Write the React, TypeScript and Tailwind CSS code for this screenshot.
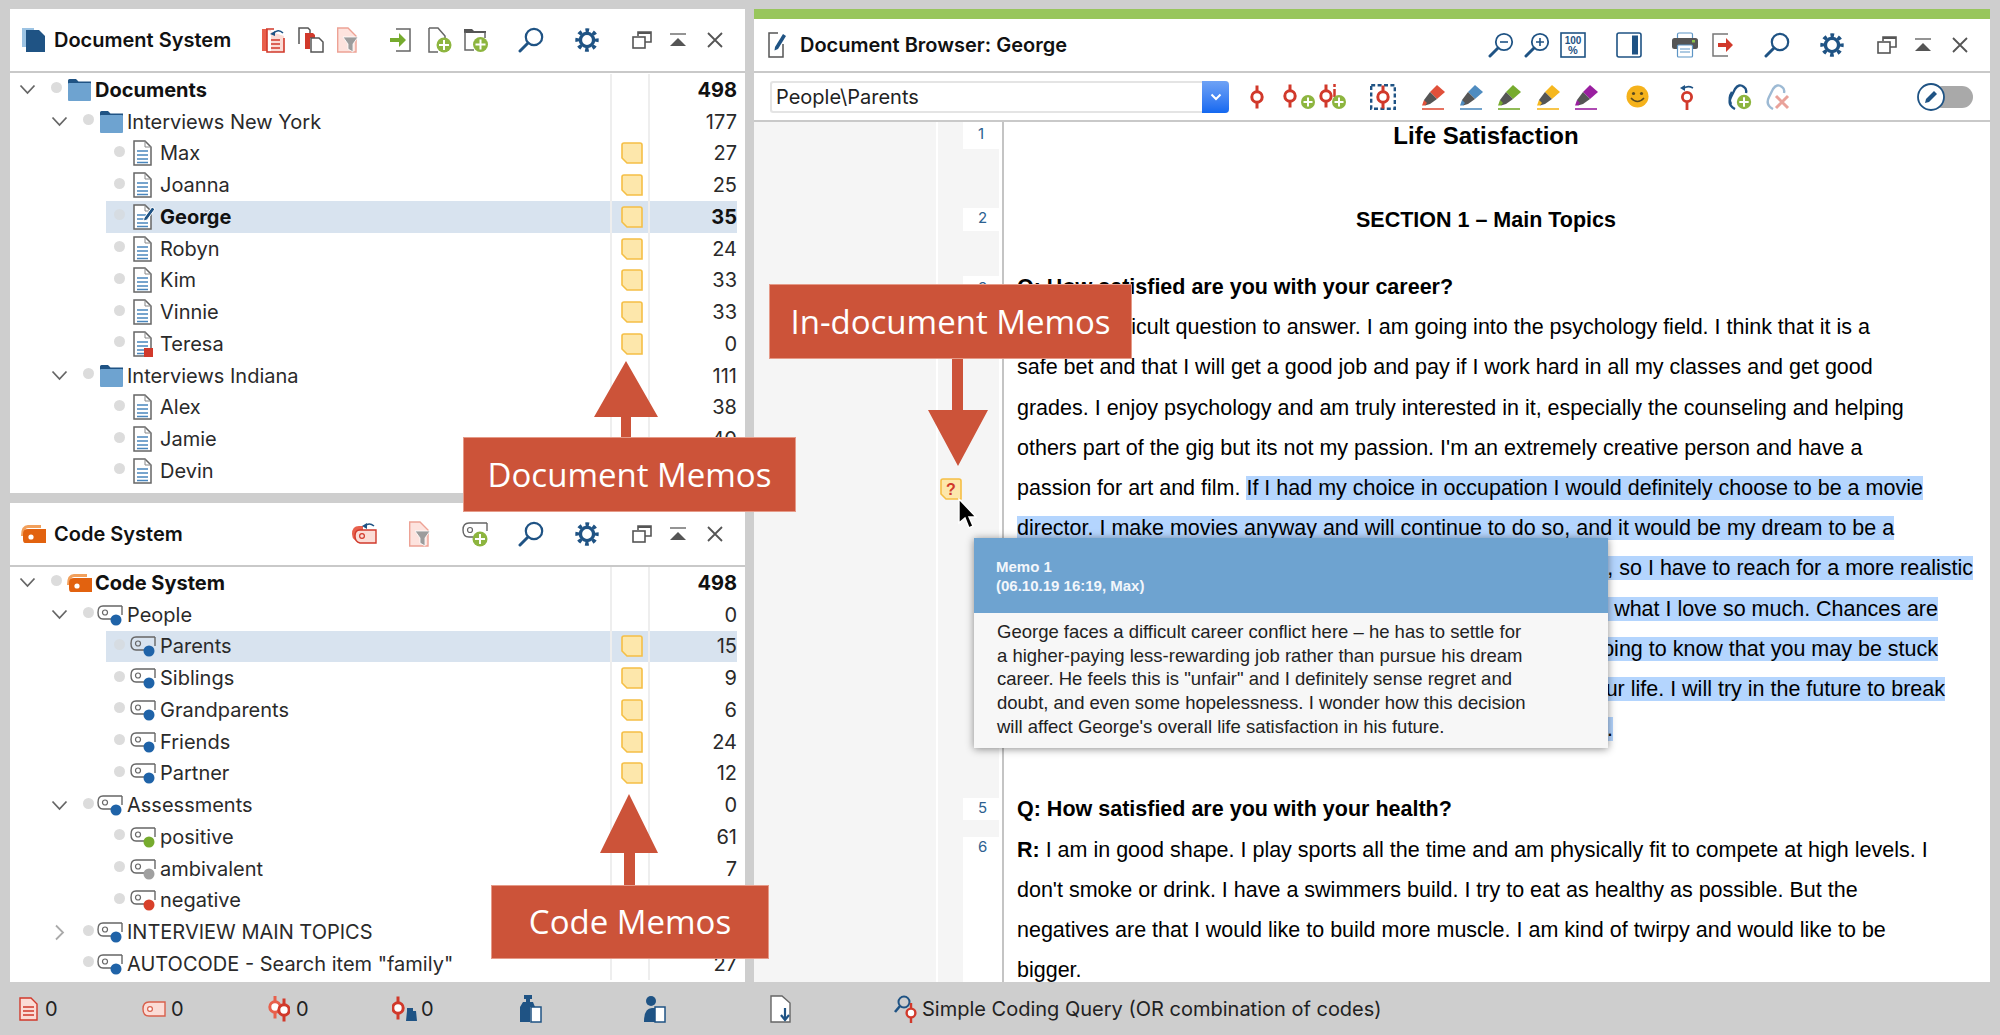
import type { ReactNode } from "react"

const navy = "#1f5384"
const red = "#d1392b"
const green = "#8db53f"

function Plus({ x, y, r = 7 }: { x: number; y: number; r?: number }) {
  return (
    <g>
      <circle cx={x} cy={y} r={r} fill={green} />
      <path d={`M${x - r + 2.5} ${y}H${x + r - 2.5}M${x} ${y - r + 2.5}V${y + r - 2.5}`} stroke="#fff" strokeWidth="2" />
    </g>
  )
}

function Chevron({ open = true }: { open?: boolean }) {
  return open ? (
    <svg width="17" height="11" viewBox="0 0 17 11" fill="none">
      <path d="M1.5 1.5L8.5 9L15.5 1.5" stroke="#666" strokeWidth="1.8" />
    </svg>
  ) : (
    <svg width="11" height="17" viewBox="0 0 11 17" fill="none">
      <path d="M2 1.5L9 8.5L2 15.5" stroke="#aaa" strokeWidth="1.8" />
    </svg>
  )
}

function Folder() {
  return (
    <svg width="23" height="22" viewBox="0 0 23 22">
      <path d="M0 1.5Q0 0 1.5 0H8L10.5 2.5H23V5H0Z" fill={navy} />
      <rect y="4" width="23" height="18" rx="1" fill="#6ea3d0" />
    </svg>
  )
}

function DocFile({ edit, flag }: { edit?: boolean; flag?: boolean }) {
  return (
    <svg width="22" height="26" viewBox="0 0 22 26" fill="none">
      <path d="M1 1H12L18 7V25H1Z" fill="#fff" stroke="#666" strokeWidth="1.5" />
      <path d="M12 1V7H18" stroke="#888" strokeWidth="1" />
      <path d="M4 11H15M4 15H15M4 19H15M4 22.5H15" stroke="#4a86bd" strokeWidth="1.4" />
      {edit && <path d="M11 14L19 3L22 5L14 16L10.5 17Z" fill={navy} stroke="#fff" strokeWidth="1" />}
      {flag && <rect x="11" y="17" width="9" height="9" fill={red} />}
    </svg>
  )
}

function Memo({ q }: { q?: boolean }) {
  return (
    <svg width="22" height="22" viewBox="0 0 22 22">
      <path d="M3 1H19Q21 1 21 3V21H6L1 16V3Q1 1 3 1Z" fill="#fde7ab" stroke="#f5bf45" strokeWidth="1.6" />
      {q && (
        <text x="11" y="17" textAnchor="middle" fontSize="16" fontWeight="700" fill={red} fontFamily="Liberation Sans">
          ?
        </text>
      )}
    </svg>
  )
}

function CodeTag({ color = "#1f63a8" }: { color?: string }) {
  return (
    <svg width="26" height="22" viewBox="0 0 26 22" fill="none">
      <path d="M25 2H6Q1 2 1 8.5T6 15H14" stroke="#666" strokeWidth="1.4" />
      <path d="M25 2V11" stroke="#666" strokeWidth="1.4" />
      <circle cx="8" cy="8.5" r="2.5" stroke="#666" strokeWidth="1.2" />
      <circle cx="19" cy="16" r="5.5" fill={color} />
    </svg>
  )
}

function CodeRoot({ w = 26 }: { w?: number }) {
  return (
    <svg width={w} height="20" viewBox="0 0 26 20">
      <path d="M1 12Q1 1 8 1H21V4H8Q4 4 4 12Z" fill="#f2a05c" />
      <path d="M5 19Q3 19 3 15V10Q3 5 8 5H26V19Z" fill="#e2620f" />
      <circle cx="11" cy="13" r="2.6" fill="#fff" />
    </svg>
  )
}

function Search() {
  return (
    <svg width="26" height="26" viewBox="0 0 26 26" fill="none">
      <circle cx="16" cy="10" r="8.2" stroke={navy} strokeWidth="2.2" />
      <path d="M10 16L2 24" stroke={navy} strokeWidth="3" strokeLinecap="round" />
    </svg>
  )
}

function Zoom({ plus }: { plus?: boolean }) {
  return (
    <svg width="26" height="26" viewBox="0 0 26 26" fill="none">
      <circle cx="16" cy="10" r="8.2" stroke={navy} strokeWidth="1.8" />
      <path d="M10 16L2 24" stroke={navy} strokeWidth="3" strokeLinecap="round" />
      <path d={plus ? "M12 10H20M16 6V14" : "M12 10H20"} stroke={navy} strokeWidth="1.6" />
    </svg>
  )
}

function Gear() {
  return (
    <svg width="24" height="24" viewBox="0 0 24 24" fill="none">
      <circle cx="12" cy="12" r="6.6" stroke={navy} strokeWidth="3.4" />
      <circle cx="12" cy="12" r="9.8" stroke={navy} strokeWidth="3.8" strokeDasharray="3.7 3.99" strokeDashoffset="1.85" />
    </svg>
  )
}

function WindowBtn() {
  return (
    <svg width="20" height="18" viewBox="0 0 20 18" fill="none">
      <path d="M6 5V1H19V11H13" stroke="#555" strokeWidth="1.6" />
      <path d="M6 1H19V3H6Z" fill="#555" />
      <rect x="1" y="6" width="12" height="11" stroke="#555" strokeWidth="1.6" />
    </svg>
  )
}

function CollapseBtn() {
  return (
    <svg width="16" height="14" viewBox="0 0 16 14">
      <path d="M0 1H16" stroke="#666" strokeWidth="1.4" />
      <path d="M8 5L16 13H0Z" fill="#555" />
    </svg>
  )
}

function CloseBtn() {
  return (
    <svg width="16" height="16" viewBox="0 0 16 16" fill="none">
      <path d="M1 1L15 15M15 1L1 15" stroke="#555" strokeWidth="1.8" />
    </svg>
  )
}

function WinControls() {
  return (
    <>
      <Slot className="ml-[19px]"><WindowBtn /></Slot>
      <Slot><CollapseBtn /></Slot>
      <Slot className="ml-[1px]"><CloseBtn /></Slot>
    </>
  )
}

function Slot({ children, className = "" }: { children: ReactNode; className?: string }) {
  return <span className={`w-[36px] shrink-0 flex justify-center ${className}`}>{children}</span>
}

function RestoreDocs() {
  return (
    <svg width="24" height="26" viewBox="0 0 24 26" fill="none">
      <path d="M0 2H5V24H0Z" fill="#e8604c" />
      <path d="M4 3H9V25H22V9" fill="#fbdcd6" />
      <path d="M4 2H12M22 11V25H5V2" stroke={red} strokeWidth="1.6" />
      <path d="M9 13H18M9 17H18M9 21H18" stroke={red} strokeWidth="1.5" />
      <path d="M11 7Q16 1 21 6" stroke={navy} strokeWidth="1.6" />
      <path d="M8 7L13 4L13 9Z" fill={navy} />
    </svg>
  )
}

function CopyDocs() {
  return (
    <svg width="26" height="26" viewBox="0 0 26 26" fill="none">
      <path d="M1 17V1H10L12 3V6" stroke="#555" strokeWidth="1.5" />
      <path d="M7 6H15L17 8V11H12V22H7Z" fill={red} />
      <path d="M13 11H21L25 15V25H13Z" fill="#fff" stroke="#555" strokeWidth="1.5" />
    </svg>
  )
}

function FilterDoc() {
  return (
    <svg width="22" height="26" viewBox="0 0 22 26">
      <path d="M0.7 1H11L19 9V25H0.7Z" fill="#fde3de" stroke="#eda295" strokeWidth="1.4" />
      <path d="M6 10H21L16 17V25L11 22V17Z" fill="#9c9c9c" stroke="#fff" strokeWidth="0.8" />
    </svg>
  )
}

function ImportDoc() {
  return (
    <svg width="22" height="26" viewBox="0 0 22 26" fill="none">
      <path d="M6 2H20V24H6" stroke="#666" strokeWidth="1.5" />
      <path d="M0 11H9V6L16 13L9 20V15H0Z" fill="#76ab2e" />
    </svg>
  )
}

function NewDoc() {
  return (
    <svg width="24" height="26" viewBox="0 0 24 26" fill="none">
      <path d="M1 1H10L17 9V12M10 25H1V1" stroke="#666" strokeWidth="1.5" />
      <Plus x={16} y={18} r={7.5} />
    </svg>
  )
}

function NewFolder() {
  return (
    <svg width="24" height="24" viewBox="0 0 24 24" fill="none">
      <path d="M0 1H8L10 3H22V5H0Z" fill="#555" />
      <path d="M1 4V22H10M21 4V10" stroke="#666" strokeWidth="1.5" />
      <Plus x={16.5} y={16.5} r={7.5} />
    </svg>
  )
}

function CodeMark({ faded }: { faded?: boolean }) {
  return (
    <g fill="none" stroke={faded ? "#e8604c" : red}>
      <path d="M0 -11.5V-6M0 6V11.5" strokeWidth="3" />
      <circle r="5.2" strokeWidth="3" fill="#fff" />
    </g>
  )
}

function Code1() {
  return (
    <svg width="16" height="24" viewBox="-8 -12 16 24">
      <CodeMark />
    </svg>
  )
}

function CodeAdd() {
  return (
    <svg width="36" height="26" viewBox="0 0 36 26">
      <g transform="translate(8 12)"><CodeMark /></g>
      <Plus x={26} y={18} r={7} />
    </svg>
  )
}

function CodeInfoAdd() {
  return (
    <svg width="28" height="26" viewBox="0 0 28 26">
      <g transform="translate(7 12)"><CodeMark /></g>
      <path d="M15.5 0V3M15.5 5V13" stroke={red} strokeWidth="2.5" />
      <Plus x={20} y={18} r={7} />
    </svg>
  )
}

function CodeBox() {
  return (
    <svg width="26" height="26" viewBox="0 0 26 26" fill="none">
      <rect x="1.2" y="1.2" width="23.6" height="23.6" stroke={navy} strokeWidth="2.4" strokeDasharray="4 2.4" />
      <g transform="translate(13 13)"><CodeMark /></g>
    </svg>
  )
}

function Highlighter({ color }: { color: string }) {
  return (
    <svg width="24" height="26" viewBox="0 0 24 26">
      <path d="M15 1L23 8L15 15L8 8Z" fill={color} />
      <path d="M8 8L15 15L8 20L3 21.5L2 16Z" fill="#555" />
      <path d="M2 16L5 19L3 21.5H0Z" fill={color} />
      <path d="M0 25H22" stroke={color} strokeWidth="1.6" />
    </svg>
  )
}

function Smile() {
  return (
    <svg width="23" height="23" viewBox="0 0 23 23" fill="none">
      <circle cx="11.5" cy="11.5" r="11" fill="#f5b21b" />
      <circle cx="7.5" cy="8.5" r="1.6" fill="#5a4a20" />
      <circle cx="15.5" cy="8.5" r="1.6" fill="#5a4a20" />
      <path d="M5 13Q11.5 20 18 13" stroke="#5a4a20" strokeWidth="1.5" />
    </svg>
  )
}

function CodeUndo() {
  return (
    <svg width="18" height="26" viewBox="0 0 18 26" fill="none">
      <path d="M5 5Q9 1 15 4" stroke={navy} strokeWidth="1.7" />
      <path d="M2 4L7 1L7 7Z" fill={navy} />
      <circle cx="9" cy="13" r="4.6" stroke={red} strokeWidth="2.8" />
      <path d="M9 18V26" stroke={red} strokeWidth="2.8" />
    </svg>
  )
}

function LinkAdd() {
  return (
    <svg width="26" height="26" viewBox="0 0 26 26" fill="none">
      <path d="M9 25Q1 21 5 13L9 5Q13 -1 18 3Q21 5 20 9" stroke={navy} strokeWidth="2.4" />
      <path d="M6 8Q2 14 5 20" stroke={navy} strokeWidth="2.4" />
      <Plus x={18} y={18} r={7.2} />
    </svg>
  )
}

function LinkRemove() {
  return (
    <svg width="26" height="26" viewBox="0 0 26 26" fill="none">
      <path d="M9 25Q1 21 5 13L9 5Q13 -1 18 3Q21 5 20 9" stroke="#9dbad4" strokeWidth="2.4" />
      <path d="M12 12L24 24M24 12L12 24" stroke="#e9a29a" strokeWidth="3" />
    </svg>
  )
}

function Percent() {
  return (
    <svg width="26" height="26" viewBox="0 0 26 26">
      <rect x="1" y="1" width="24" height="24" fill="none" stroke={navy} strokeWidth="1.6" />
      <text x="13" y="11.5" textAnchor="middle" fontSize="10" fontWeight="700" fill={navy} fontFamily="Liberation Sans">100</text>
      <text x="13" y="22" textAnchor="middle" fontSize="11" fontWeight="700" fill={navy} fontFamily="Liberation Sans">%</text>
    </svg>
  )
}

function SideBar() {
  return (
    <svg width="26" height="26" viewBox="0 0 26 26">
      <rect x="1" y="1" width="24" height="24" rx="2" fill="none" stroke={navy} strokeWidth="1.6" />
      <rect x="16" y="3.5" width="6" height="19" fill={navy} />
    </svg>
  )
}

function Printer() {
  return (
    <svg width="26" height="26" viewBox="0 0 26 26">
      <rect x="5.5" y="1" width="15" height="9" rx="1.5" fill="#fff" stroke="#5d95c5" strokeWidth="1.2" />
      <rect x="0" y="6" width="26" height="11" rx="2.5" fill="#555" />
      <rect x="20" y="8" width="3" height="2.5" fill="#8bc34a" />
      <rect x="5.5" y="13" width="15" height="12" rx="1" fill="#fff" stroke="#5d95c5" strokeWidth="1.2" />
      <path d="M8 17H18M8 20H18" stroke="#5d95c5" strokeWidth="1.2" />
    </svg>
  )
}

function ExportDoc() {
  return (
    <svg width="22" height="24" viewBox="0 0 22 24" fill="none">
      <path d="M16 1H1V23H16" stroke="#777" strokeWidth="1.5" />
      <path d="M6 10H14V5L21 12L14 19V14H6Z" fill={red} />
    </svg>
  )
}

function Toggle() {
  return (
    <span className="flex items-center w-[56px] h-[28px] relative shrink-0">
      <span className="ml-[14px] w-[42px] h-[22px] rounded-full bg-[#a9a9a9]" />
      <svg className="absolute left-0 top-0" width="28" height="28" viewBox="0 0 28 28" fill="none">
        <circle cx="14" cy="14" r="13" fill="#fff" stroke={navy} strokeWidth="1.8" />
        <path d="M8 20L9 16L17 8L20 11L12 19Z" fill={navy} />
      </svg>
    </span>
  )
}

function PanelHeader({ icon, title, children }: { icon: ReactNode; title: string; children: ReactNode }) {
  return (
    <div className="h-[64px] shrink-0 flex items-center pr-[12px] border-b-2 border-[#c9c9c9]">
      <span className="w-[44px] flex justify-end pr-[8px]">{icon}</span>
      <span className="text-[20px] font-semibold text-[#111]">{title}</span>
      <div className="ml-auto flex items-center">{children}</div>
    </div>
  )
}

type RowData = {
  name: string
  count?: string
  level: 0 | 1 | 2
  icon: ReactNode
  chevron?: "open" | "closed"
  memo?: boolean
  bold?: boolean
  selected?: boolean
}

function TreeRow({ row }: { row: RowData }) {
  const pad = row.level === 0 ? "pl-0" : row.level === 1 ? "pl-[32px]" : "pl-[96px]"
  return (
    <div className={`flex h-[31.75px] pr-[8px] ${pad}`}>
      <div className={`flex-1 flex items-stretch ${row.selected ? "bg-[#d8e3ef]" : ""}`}>
        <div className="flex-1 flex items-center min-w-0">
          {row.level < 2 && (
            <span className="w-[34px] flex justify-center">
              {row.chevron === "open" && <Chevron />}
              {row.chevron === "closed" && <Chevron open={false} />}
            </span>
          )}
          <span className={`flex justify-center ${row.level < 2 ? "w-[24px]" : "w-[27px]"}`}>
            <span className={`w-[11px] h-[11px] -mt-[4px] rounded-full ${row.selected ? "bg-[#d6dce2]" : "bg-[#dcdcdc]"}`} />
          </span>
          <span className="w-[27px] shrink-0 flex items-center">{row.icon}</span>
          <span className={`whitespace-nowrap text-[20px] ${row.bold ? "font-bold text-[#111]" : "text-[#2a2a2a]"}`}>{row.name}</span>
        </div>
        <div className="w-[38px] shrink-0 border-l-2 border-[#eeeeee] flex items-center pl-[9px]">{row.memo && <Memo />}</div>
        <div className={`w-[89px] shrink-0 border-l-2 border-[#eeeeee] flex items-center justify-end text-[20px] ${row.bold ? "font-bold text-[#111]" : "text-[#2a2a2a]"}`}>
          {row.count}
        </div>
      </div>
    </div>
  )
}

const docRows: RowData[] = [
  { name: "Documents", count: "498", level: 0, icon: <Folder />, chevron: "open", bold: true },
  { name: "Interviews New York", count: "177", level: 1, icon: <Folder />, chevron: "open" },
  { name: "Max", count: "27", level: 2, icon: <DocFile />, memo: true },
  { name: "Joanna", count: "25", level: 2, icon: <DocFile />, memo: true },
  { name: "George", count: "35", level: 2, icon: <DocFile edit />, memo: true, bold: true, selected: true },
  { name: "Robyn", count: "24", level: 2, icon: <DocFile />, memo: true },
  { name: "Kim", count: "33", level: 2, icon: <DocFile />, memo: true },
  { name: "Vinnie", count: "33", level: 2, icon: <DocFile />, memo: true },
  { name: "Teresa", count: "0", level: 2, icon: <DocFile flag />, memo: true },
  { name: "Interviews Indiana", count: "111", level: 1, icon: <Folder />, chevron: "open" },
  { name: "Alex", count: "38", level: 2, icon: <DocFile /> },
  { name: "Jamie", count: "40", level: 2, icon: <DocFile /> },
  { name: "Devin", count: "33", level: 2, icon: <DocFile /> },
]

const tag = <span className="-ml-[3px] flex"><CodeTag /></span>

const codeRows: RowData[] = [
  { name: "Code System", count: "498", level: 0, icon: <span className="-ml-[2px] flex"><CodeRoot /></span>, chevron: "open", bold: true },
  { name: "People", count: "0", level: 1, icon: tag, chevron: "open" },
  { name: "Parents", count: "15", level: 2, icon: tag, memo: true, selected: true },
  { name: "Siblings", count: "9", level: 2, icon: tag, memo: true },
  { name: "Grandparents", count: "6", level: 2, icon: tag, memo: true },
  { name: "Friends", count: "24", level: 2, icon: tag, memo: true },
  { name: "Partner", count: "12", level: 2, icon: tag, memo: true },
  { name: "Assessments", count: "0", level: 1, icon: tag, chevron: "open" },
  { name: "positive", count: "61", level: 2, icon: <span className="-ml-[3px] flex"><CodeTag color="#76ab2e" /></span> },
  { name: "ambivalent", count: "7", level: 2, icon: <span className="-ml-[3px] flex"><CodeTag color="#a0a0a0" /></span> },
  { name: "negative", count: "25", level: 2, icon: <span className="-ml-[3px] flex"><CodeTag color="#d8402a" /></span> },
  { name: "INTERVIEW MAIN TOPICS", count: "113", level: 1, icon: tag, chevron: "closed" },
  { name: 'AUTOCODE - Search item "family"', count: "27", level: 1, icon: tag },
]

function GutterNumbers() {
  return (
    <div className="w-[39px] shrink-0 bg-white flex flex-col text-[15px] text-[#2d6190] font-['Inter',sans-serif]">
      <div className="h-[27px] pl-[15px] leading-[24px]">1</div>
      <div className="h-[59px] mr-[3px] bg-[#f5f5f5]" />
      <div className="h-[23px] pl-[15px] leading-[20px]">2</div>
      <div className="h-[45px] mr-[3px] bg-[#f5f5f5]" />
      <div className="h-[24px] pl-[15px] leading-[24px]">3</div>
      <div className="h-[498px] mr-[3px] bg-[#f5f5f5]" />
      <div className="h-[22px] pl-[15px] leading-[20px]">5</div>
      <div className="h-[17px] mr-[3px] bg-[#f5f5f5]" />
      <div className="pl-[15px] leading-[20px]">6</div>
    </div>
  )
}

function Line({ children, className = "" }: { children: ReactNode; className?: string }) {
  return <div className={`h-[40.2px] leading-[40.2px] whitespace-nowrap ${className}`}>{children}</div>
}

function Hl({ children }: { children: ReactNode }) {
  return <span className="bg-[#b4d5fe]">{children}</span>
}

function DocumentBody() {
  return (
    <div className="flex-1 bg-white pl-[13px] text-[21.5px] text-black font-['Liberation_Sans',Arial,sans-serif] overflow-hidden">
      <div className="h-[28px] leading-[28px] mt-0 w-[938px] text-center text-[24px] font-bold">Life Satisfaction</div>
      <div className="h-[28px] leading-[28px] mt-[56px] w-[938px] text-center font-bold">SECTION 1 – Main Topics</div>
      <div className="mt-[33px]">
        <Line className="font-bold">Q: How satisfied are you with your career?</Line>
        <Line><b>R:</b> It is a difficult question to answer. I am going into the psychology field. I think that it is a</Line>
        <Line>safe bet and that I will get a good job and pay if I work hard in all my classes and get good</Line>
        <Line>grades. I enjoy psychology and am truly interested in it, especially the counseling and helping</Line>
        <Line>others part of the gig but its not my passion. I'm an extremely creative person and have a</Line>
        <Line>passion for art and film. <Hl>If I had my choice in occupation I would definitely choose to be a movie</Hl></Line>
        <Line><Hl>director. I make movies anyway and will continue to do so, and it would be my dream to be a</Hl></Line>
        <Line className="w-[956px] text-right"><Hl>famous director, but the odds are quite small, so I have to reach for a more realistic</Hl></Line>
        <Line className="w-[921px] text-right"><Hl>career, even if it will not be doing what I love so much. Chances are</Hl></Line>
        <Line className="w-[921px] text-right"><Hl>I will settle for that, but it is hard going to know that you may be stuck</Hl></Line>
        <Line className="w-[928px] text-right"><Hl>in a job you do not love for the rest of your life. I will try in the future to break</Hl></Line>
        <Line className="w-[596px] text-right"><Hl>out of that and follow my dreams.</Hl></Line>
        <Line> </Line>
        <Line className="font-bold">Q: How satisfied are you with your health?</Line>
        <Line><b>R:</b> I am in good shape. I play sports all the time and am physically fit to compete at high levels. I</Line>
        <Line>don't smoke or drink. I have a swimmers build. I try to eat as healthy as possible. But the</Line>
        <Line>negatives are that I would like to build more muscle. I am kind of twirpy and would like to be</Line>
        <Line>bigger.</Line>
      </div>
    </div>
  )
}

function Callout({ label, className }: { label: string; className: string }) {
  return (
    <div className={`absolute bg-[#cc5339] border border-[#e59a88] text-white flex items-center justify-center text-[33px] font-['Open_Sans',sans-serif] ${className}`}>
      {label}
    </div>
  )
}

function StatusIcons() {
  return (
    <div className="h-[53px] shrink-0 flex items-center pl-[19px] text-[20px] text-[#222]">
      <svg width="19" height="24" viewBox="0 0 19 24">
        <path d="M1 1H12L18 7V23H1Z" fill="#fbdcd6" stroke={red} strokeWidth="1.4" />
        <path d="M4 10H15M4 14H15M4 18H15" stroke={red} strokeWidth="1.4" />
      </svg>
      <span className="ml-[7px] w-[12px]">0</span>
      <svg className="ml-[85px]" width="24" height="16" viewBox="0 0 24 16">
        <path d="M23 1H7Q1 1 1 8T7 15H23Z" fill="#fbdcd6" stroke="#d9604c" strokeWidth="1.4" />
        <circle cx="8" cy="8" r="2.4" fill="#fff" stroke="#d9604c" strokeWidth="1.2" />
      </svg>
      <span className="ml-[5px] w-[12px]">0</span>
      <svg className="ml-[85px]" width="22" height="26" viewBox="-7 -11 22 26">
        <CodeMark faded />
        <g transform="translate(9 3)"><CodeMark /></g>
      </svg>
      <span className="ml-[6px] w-[12px]">0</span>
      <svg className="ml-[84px]" width="25" height="26" viewBox="0 0 25 26">
        <g transform="translate(6 12)"><CodeMark /></g>
        <path d="M15 12H21V15H24L25 25H14L15 15H15Z" fill={navy} />
      </svg>
      <span className="ml-[4px] w-[12px]">0</span>
      <svg className="ml-[87px]" width="22" height="28" viewBox="0 0 22 28">
        <path d="M4 0H12V4H10V7H13L15 12H10V27H0V12L3 7H6V4H4Z" fill={navy} />
        <rect x="11" y="12" width="10" height="15" fill="#fff" stroke={navy} strokeWidth="1.5" />
      </svg>
      <svg className="ml-[102px]" width="22" height="28" viewBox="0 0 22 28">
        <circle cx="7" cy="6" r="5" fill={navy} />
        <path d="M0 27Q0 13 8 13H11V27Z" fill={navy} />
        <rect x="11" y="12" width="10" height="15" fill="#fff" stroke={navy} strokeWidth="1.5" />
      </svg>
      <svg className="ml-[104px]" width="23" height="28" viewBox="0 0 23 28">
        <path d="M1 1H12L20 8V27H1Z" fill="#fff" stroke="#666" strokeWidth="1.4" />
        <path d="M15 13V24M11 20L15 25L19 20" stroke={navy} strokeWidth="2.2" fill="none" />
      </svg>
      <svg className="ml-[101px]" width="23" height="28" viewBox="0 0 23 28" fill="none">
        <circle cx="10" cy="7" r="5.5" stroke={navy} strokeWidth="2" />
        <path d="M6 11L1 17" stroke={navy} strokeWidth="2.6" />
        <path d="M17 8V14M17 23V28" stroke={red} strokeWidth="2.4" />
        <circle cx="17" cy="18" r="4.4" fill="#fff" stroke={red} strokeWidth="2.4" />
      </svg>
      <span className="ml-[5px] whitespace-nowrap">Simple Coding Query (OR combination of codes)</span>
    </div>
  )
}

export default function App() {
  return (
    <div className="relative w-[2000px] h-screen overflow-hidden flex flex-col bg-[#cecece] font-['Inter',sans-serif]">
      <div className="flex-1 min-h-0 flex pt-[9px] px-[10px] gap-[9px]">
        <div className="w-[735px] shrink-0 flex flex-col gap-[10px]">
          <section className="h-[484px] shrink-0 bg-white flex flex-col overflow-hidden">
            <PanelHeader
              title="Document System"
              icon={
                <svg width="24" height="26" viewBox="0 0 24 26">
                  <path d="M0 1H12V20H0Z" fill="#9cc3e3" />
                  <path d="M4 3H17L23 9V25H4Z" fill={navy} />
                </svg>
              }
            >
              <Slot><RestoreDocs /></Slot>
              <Slot className="ml-[1px]"><CopyDocs /></Slot>
              <Slot className="ml-[1px]"><FilterDoc /></Slot>
              <Slot className="ml-[17px]"><ImportDoc /></Slot>
              <Slot className="ml-[3px]"><NewDoc /></Slot>
              <Slot><NewFolder /></Slot>
              <Slot className="ml-[19px]"><Search /></Slot>
              <Slot className="ml-[20px]"><Gear /></Slot>
              <WinControls />
            </PanelHeader>
            <div className="flex-1 pt-[1px]">
              {docRows.map((r) => (
                <TreeRow key={r.name} row={r} />
              ))}
            </div>
          </section>
          <section className="flex-1 min-h-0 bg-white flex flex-col overflow-hidden">
            <PanelHeader title="Code System" icon={<CodeRoot />}>
              <Slot>
                <svg width="26" height="24" viewBox="0 0 26 24" fill="none">
                  <path d="M1 12Q1 4 8 4H12V20Q1 20 1 12Z" fill="#e8604c" />
                  <path d="M25 8H9Q4 8 4 14T9 21H25Z" fill="#fbdcd6" stroke={red} strokeWidth="1.4" />
                  <circle cx="11" cy="14" r="2.4" stroke={red} strokeWidth="1.2" />
                  <path d="M14 4Q18 0 23 4" stroke={navy} strokeWidth="1.6" />
                  <path d="M11 4L16 1V7Z" fill={navy} />
                </svg>
              </Slot>
              <Slot className="ml-[20px]"><FilterDoc /></Slot>
              <Slot className="ml-[19px]">
                <svg width="26" height="26" viewBox="0 0 26 26" fill="none">
                  <path d="M25 2H7Q1 2 1 9T7 16H11M25 2V10" stroke="#666" strokeWidth="1.4" />
                  <circle cx="8" cy="9" r="2.5" stroke="#666" strokeWidth="1.2" />
                  <Plus x={18} y={18} r={7.5} />
                </svg>
              </Slot>
              <Slot className="ml-[20px]"><Search /></Slot>
              <Slot className="ml-[20px]"><Gear /></Slot>
              <WinControls />
            </PanelHeader>
            <div className="flex-1">
              {codeRows.map((r) => (
                <TreeRow key={r.name} row={r} />
              ))}
            </div>
          </section>
        </div>

        <section className="flex-1 min-w-0 bg-white flex flex-col overflow-hidden">
          <div className="h-[10px] shrink-0 bg-[#98c65c]" />
          <div className="h-[54px] shrink-0 flex items-center pr-[12px] border-b-2 border-[#c9c9c9]">
            <span className="ml-[14px] w-[32px]">
              <svg width="20" height="26" viewBox="0 0 20 26" fill="none">
                <path d="M10 1H1V25H15V12" stroke="#555" strokeWidth="1.5" />
                <path d="M7 15L15 2L18 4L10 17L6.5 18.5Z" fill={navy} />
              </svg>
            </span>
            <span className="text-[20px] font-semibold text-[#111]">Document Browser: George</span>
            <div className="ml-auto flex items-center">
              <Slot><Zoom /></Slot>
              <Slot><Zoom plus /></Slot>
              <Slot><Percent /></Slot>
              <Slot className="ml-[20px]"><SideBar /></Slot>
              <Slot className="ml-[20px]"><Printer /></Slot>
              <Slot className="ml-[2px]"><ExportDoc /></Slot>
              <Slot className="ml-[18px]"><Search /></Slot>
              <Slot className="ml-[19px]"><Gear /></Slot>
              <WinControls />
            </div>
          </div>
          <div className="h-[49px] shrink-0 flex items-center pl-[16px] pr-[17px] border-b-2 border-[#c9c9c9]">
            <div className="w-[459px] h-[32px] shrink-0 flex items-stretch border-2 border-[#e4e4e4] border-r-0 rounded-[3px] bg-white">
              <span className="flex-1 pl-[4px] text-[20px] leading-[28px] text-[#222]">People\Parents</span>
              <span className="w-[27px] -my-[2px] rounded-r-[4px] bg-gradient-to-b from-[#6ea2f5] to-[#1268f0] flex items-center justify-center">
                <svg width="12" height="8" viewBox="0 0 12 8" fill="none">
                  <path d="M1.5 1.5L6 6L10.5 1.5" stroke="#fff" strokeWidth="2" />
                </svg>
              </span>
            </div>
            <span className="ml-[16px] w-[24px] flex justify-center"><Code1 /></span>
            <Slot className="ml-[13px]"><CodeAdd /></Slot>
            <span className="ml-[1px] w-[28px] flex justify-center"><CodeInfoAdd /></span>
            <span className="ml-[23px] w-[26px] flex"><CodeBox /></span>
            <Slot className="ml-[20px]"><Highlighter color="#e0503a" /></Slot>
            <Slot className="ml-[2px]"><Highlighter color="#4f8cc0" /></Slot>
            <Slot className="ml-[2px]"><Highlighter color="#76ab2e" /></Slot>
            <Slot className="ml-[3px]"><Highlighter color="#f5b71f" /></Slot>
            <Slot className="ml-[2px]"><Highlighter color="#9a1fa0" /></Slot>
            <Slot className="ml-[14px]"><Smile /></Slot>
            <Slot className="ml-[14px]"><CodeUndo /></Slot>
            <Slot className="ml-[16px]"><LinkAdd /></Slot>
            <Slot className="ml-[2px]"><LinkRemove /></Slot>
            <div className="ml-auto"><Toggle /></div>
          </div>
          <div className="flex-1 min-h-0 flex">
            <div className="w-[182px] shrink-0 bg-[#f5f5f5]" />
            <div className="w-[2px] shrink-0 bg-white" />
            <div className="w-[25px] shrink-0 bg-[#f5f5f5]" />
            <GutterNumbers />
            <div className="w-[2px] shrink-0 bg-[#c4c4c4]" />
            <DocumentBody />
          </div>
        </section>
      </div>

      <StatusIcons />

      {/* callouts and the memo tooltip lie over the panels */}
      <svg className="absolute left-[590px] top-[355px]" width="72" height="90" viewBox="0 0 72 90">
        <path d="M36 6L68 62H41V90H31V62H4Z" fill="#cc5339" />
      </svg>
      <Callout label="Document Memos" className="left-[463px] top-[437px] w-[333px] h-[75px]" />

      <svg className="absolute left-[595px] top-[790px]" width="68" height="100" viewBox="0 0 68 100">
        <path d="M34 4L63 63H40V100H29V63H5Z" fill="#cc5339" />
      </svg>
      <Callout label="Code Memos" className="left-[491px] top-[885px] w-[278px] h-[74px]" />

      <svg className="absolute left-[925px] top-[350px]" width="68" height="118" viewBox="0 0 68 118">
        <path d="M27 0H38V60H63L33 116L3 60H27Z" fill="#cc5339" />
      </svg>
      <Callout label="In-document Memos" className="left-[769px] top-[284px] w-[363px] h-[75px]" />

      <div className="absolute left-[940px] top-[478px]"><Memo q /></div>
      <svg className="absolute left-[957px] top-[498px]" width="20" height="32" viewBox="0 0 20 32">
        <path d="M2 1V25L8 20L12 30L16 28L12 19H19Z" fill="#000" stroke="#fff" strokeWidth="1.4" />
      </svg>

      <div className="absolute left-[974px] top-[538px] w-[634px] h-[210px] flex flex-col bg-[#f7f7f7] shadow-[0_1px_8px_rgba(0,0,0,0.45)] font-['Liberation_Sans',Arial,sans-serif]">
        <div className="h-[75px] shrink-0 bg-[#6ea3d0] pl-[22px] pt-[19px] text-[15px] leading-[19px] font-bold text-[#f2f6fb]">
          <div>Memo 1</div>
          <div>(06.10.19 16:19, Max)</div>
        </div>
        <div className="pl-[23px] pt-[7px] text-[18.5px] leading-[23.7px] text-[#222] whitespace-nowrap">
          <div>George faces a difficult career conflict here – he has to settle for</div>
          <div>a higher-paying less-rewarding job rather than pursue his dream</div>
          <div>career. He feels this is "unfair" and I definitely sense regret and</div>
          <div>doubt, and even some hopelessness. I wonder how this decision</div>
          <div>will affect George's overall life satisfaction in his future.</div>
        </div>
      </div>
    </div>
  )
}
